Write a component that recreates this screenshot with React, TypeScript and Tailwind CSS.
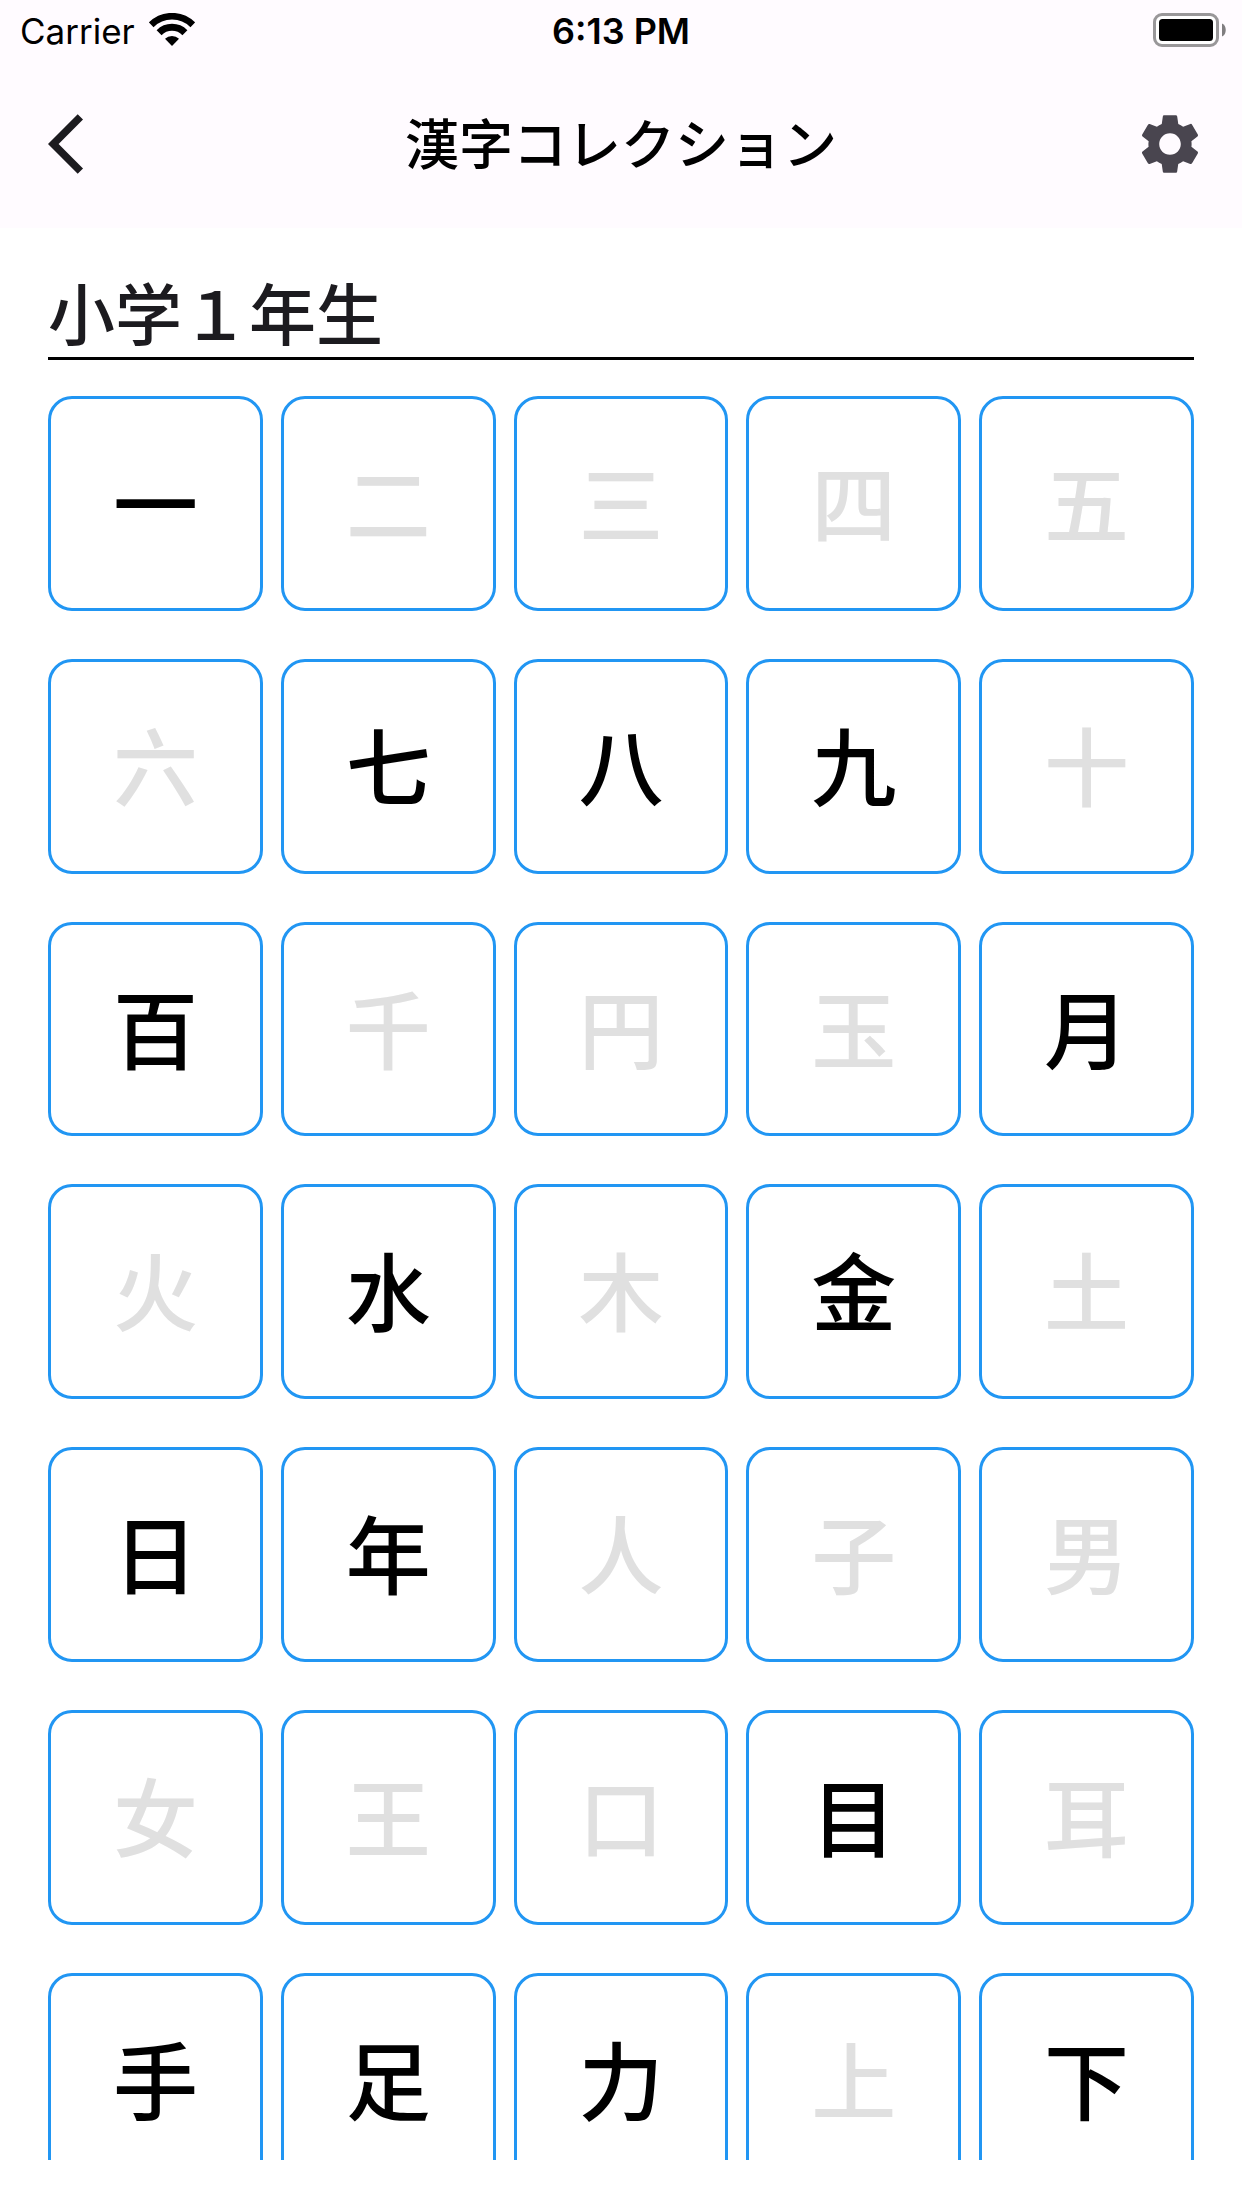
import clsx from "clsx";
import { MdArrowBackIos, MdSettings } from "react-icons/md";

const grade = "小学１年生";

const kanjiList = [
    "一二三四五",
    "六七八九十",
    "百千円玉月",
    "火水木金土",
    "日年人子男",
    "女王口目耳",
    "手足力上下",
].join("");

const collected = new Set("一七八九百月水金日年目手足力下");

function WifiIcon() {
    return (
        <svg width="46" height="34" viewBox="0 0 46 34" fill="none" stroke="black" aria-hidden="true">
            <path d="M2.2 11.8a29.4 29.4 0 0 1 41.6 0" strokeWidth="6.6" />
            <path d="M10.1 19.7a18.2 18.2 0 0 1 25.8 0" strokeWidth="7" />
            <path d="M23 33l-7-7.2a10 10 0 0 1 14 0z" fill="black" stroke="none" />
        </svg>
    );
}

function BatteryIcon() {
    return (
        <svg width="73" height="34" viewBox="0 0 73 34" aria-hidden="true">
            <rect x="1.5" y="1.5" width="63" height="31" rx="7.5" fill="white" stroke="#999799" strokeWidth="3" />
            <rect x="6" y="6" width="54" height="22" rx="3.5" fill="black" />
            <path d="M69 10.5c5 2 5 11 0 13z" fill="#807e80" />
        </svg>
    );
}

function StatusBar() {
    return (
        <div className="grid h-[60px] grid-cols-3 items-center px-4 font-[Inter,sans-serif] leading-none text-black">
            <div className="flex items-center gap-3.5 pl-1">
                <span className="pt-0.5 text-[35px]">Carrier</span>
                <WifiIcon />
            </div>
            <span className="pt-0.5 text-center text-[36px] font-semibold">6:13 PM</span>
            <div className="flex justify-end">
                <BatteryIcon />
            </div>
        </div>
    );
}

function KanjiCard({ kanji, active }: { kanji: string; active: boolean }) {
    return (
        <button
            type="button"
            className={clsx(
                "flex aspect-square items-center justify-center rounded-3xl border-3 border-[#2196f3] bg-white pb-2 text-[85px] leading-none font-medium",
                active ? "text-black" : "text-[#e0e0e0]",
            )}
        >
            {kanji}
        </button>
    );
}

export default function App() {
    return (
        <div className="flex h-screen flex-col bg-white font-['Noto_Sans_CJK_SC','Noto_Sans_CJK_JP',sans-serif]">
            <header className="bg-[#fffbff]">
                <StatusBar />
                <div className="grid h-[168px] grid-cols-[1fr_auto_1fr] items-center px-9">
                    <button type="button" aria-label="戻る" className="ml-3 justify-self-start text-[#1c1b1f]">
                        <MdArrowBackIos className="size-[72px]" />
                    </button>
                    <h1 className="pb-1 text-[54px] leading-none font-medium text-black">漢字コレクション</h1>
                    <button type="button" aria-label="設定" className="justify-self-end text-[#49454f]">
                        <MdSettings className="size-[72px]" />
                    </button>
                </div>
            </header>

            <main className="mb-12 min-h-0 flex-1 overflow-y-auto px-12 pt-11 [scrollbar-width:none]">
                <h2 className="border-b-3 border-black pb-2 text-[67px] leading-[77px] font-medium text-[#1c1b1f]">
                    {grade}
                </h2>
                <div className="mt-9 grid grid-cols-5 gap-x-[18px] gap-y-12">
                    {[...kanjiList].map((kanji) => (
                        <KanjiCard key={kanji} kanji={kanji} active={collected.has(kanji)} />
                    ))}
                </div>
            </main>
        </div>
    );
}
